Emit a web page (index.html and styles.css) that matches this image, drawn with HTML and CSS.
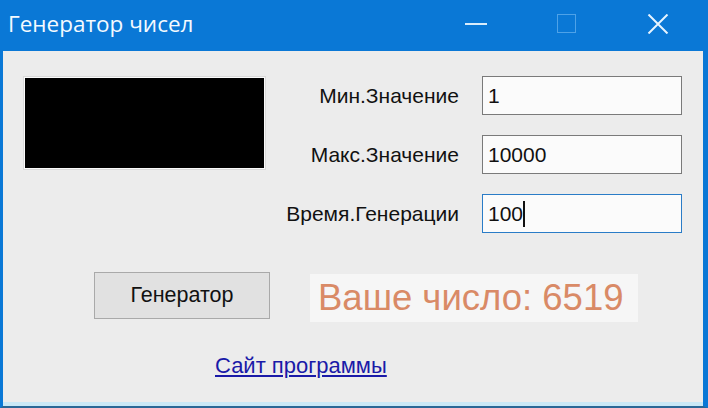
FILE: index.html
```html
<!DOCTYPE html>
<html lang="ru">
<head>
    <meta charset="UTF-8">
    <title>Генератор чисел</title>
    <link rel="stylesheet" href="styles.css">
</head>
<body>

    <div class="window">
        <!-- Заголовок окна -->
        <div class="title-bar">
            <span class="title">Генератор чисел</span>
            <div class="window-buttons">
                <span class="win-btn minimize"></span>
                <span class="win-btn maximize"></span>
                <span class="win-btn close">
                    <svg width="22" height="20" viewBox="0 0 22 20">
                        <path d="M1.5 0.5 L20.5 19.5 M20.5 0.5 L1.5 19.5" stroke="#e6f4ff" stroke-width="2" fill="none"/>
                    </svg>
                </span>
            </div>
        </div>

        <div class="content">
            <div class="top-row">
                <div class="picture"></div>

                <div class="fields">
                    <label class="field-label">Мин.Значение</label>
                    <div class="field-input">1</div>

                    <label class="field-label">Макс.Значение</label>
                    <div class="field-input">10000</div>

                    <label class="field-label">Время.Генерации</label>
                    <div class="field-input focused">100<span class="caret"></span></div>
                </div>
            </div>

            <div class="action-row">
                <button class="generate-button">Генератор</button>
                <div class="result">Ваше число: 6519</div>
            </div>

            <a href="#" class="site-link">Сайт программы</a>
        </div>
    </div>

</body>
</html>
```

FILE: styles.css
```css
body {
    margin: 0;
    padding: 0;
    background-color: #ececec;
    font-family: "Liberation Sans", Arial, sans-serif;
}

.window {
    width: 708px;
    height: 408px;
    box-sizing: border-box;
    display: flex;
    flex-direction: column;
    border-left: 3px solid #0a78d6;
    border-right: 5px solid #0a78d6;
    border-bottom: 2px solid #2a6796;
    overflow: hidden;
}

.title-bar {
    display: flex;
    align-items: center;
    justify-content: space-between;
    height: 51px;
    flex-shrink: 0;
    background-color: #0a78d6;
    color: #f4faff;
    padding-left: 5px;
}

.title {
    font-family: "Open Sans", sans-serif;
    font-size: 22.5px;
    padding-bottom: 4px;
}

.window-buttons {
    display: flex;
    align-items: center;
    height: 100%;
}

.win-btn {
    display: flex;
    align-items: center;
    justify-content: center;
    width: 91px;
    height: 100%;
    padding-bottom: 4px;
    box-sizing: border-box;
}

.minimize::before {
    content: "";
    width: 22px;
    height: 2px;
    background: #d9ecfb;
}

.maximize::before {
    content: "";
    width: 17px;
    height: 17px;
    border: 1.5px solid #4ea2e8;
}

.content {
    flex: 1;
    display: flex;
    flex-direction: column;
    border-bottom: 4px solid #c9e8f6;
}

.top-row {
    display: flex;
    align-items: flex-start;
    padding-top: 25px;
}

.picture {
    width: 239px;
    height: 90px;
    margin-left: 21px;
    margin-top: 1px;
    background-color: #000;
    border: 1px solid #fbfbfb;
    box-shadow: 0 0 0 1px #dadada;
}

.fields {
    flex: 1;
    display: grid;
    grid-template-columns: 1fr 200px;
    row-gap: 20px;
    margin-right: 21px;
}

.field-label {
    justify-self: end;
    align-self: center;
    padding-right: 23px;
    font-size: 21px;
    color: #111;
}

.field-input {
    height: 39px;
    box-sizing: border-box;
    display: flex;
    align-items: center;
    padding-left: 5px;
    background-color: #fbfbfb;
    border: 1px solid #7a7a7a;
    font-size: 21px;
    color: #111;
}

.field-input.focused {
    border-color: #2a7cc7;
}

.caret {
    width: 2px;
    height: 26px;
    background: #111;
}

.action-row {
    display: flex;
    align-items: center;
    margin-top: 36px;
    padding-left: 91px;
}

.generate-button {
    width: 176px;
    height: 47px;
    background-color: #e1e1e1;
    border: 1px solid #a9a9a9;
    font-family: "Liberation Sans", Arial, sans-serif;
    font-size: 21.5px;
    color: #111;
}

.result {
    margin-left: 40px;
    margin-top: 5px;
    width: 328px;
    height: 48px;
    display: flex;
    align-items: center;
    padding-left: 8px;
    box-sizing: border-box;
    background-color: #f6f6f6;
    color: #d98a66;
    font-size: 36.5px;
}

.site-link {
    align-self: flex-start;
    margin-left: 212px;
    margin-top: 31px;
    font-size: 22px;
    color: #1a1aa8;
}
```
